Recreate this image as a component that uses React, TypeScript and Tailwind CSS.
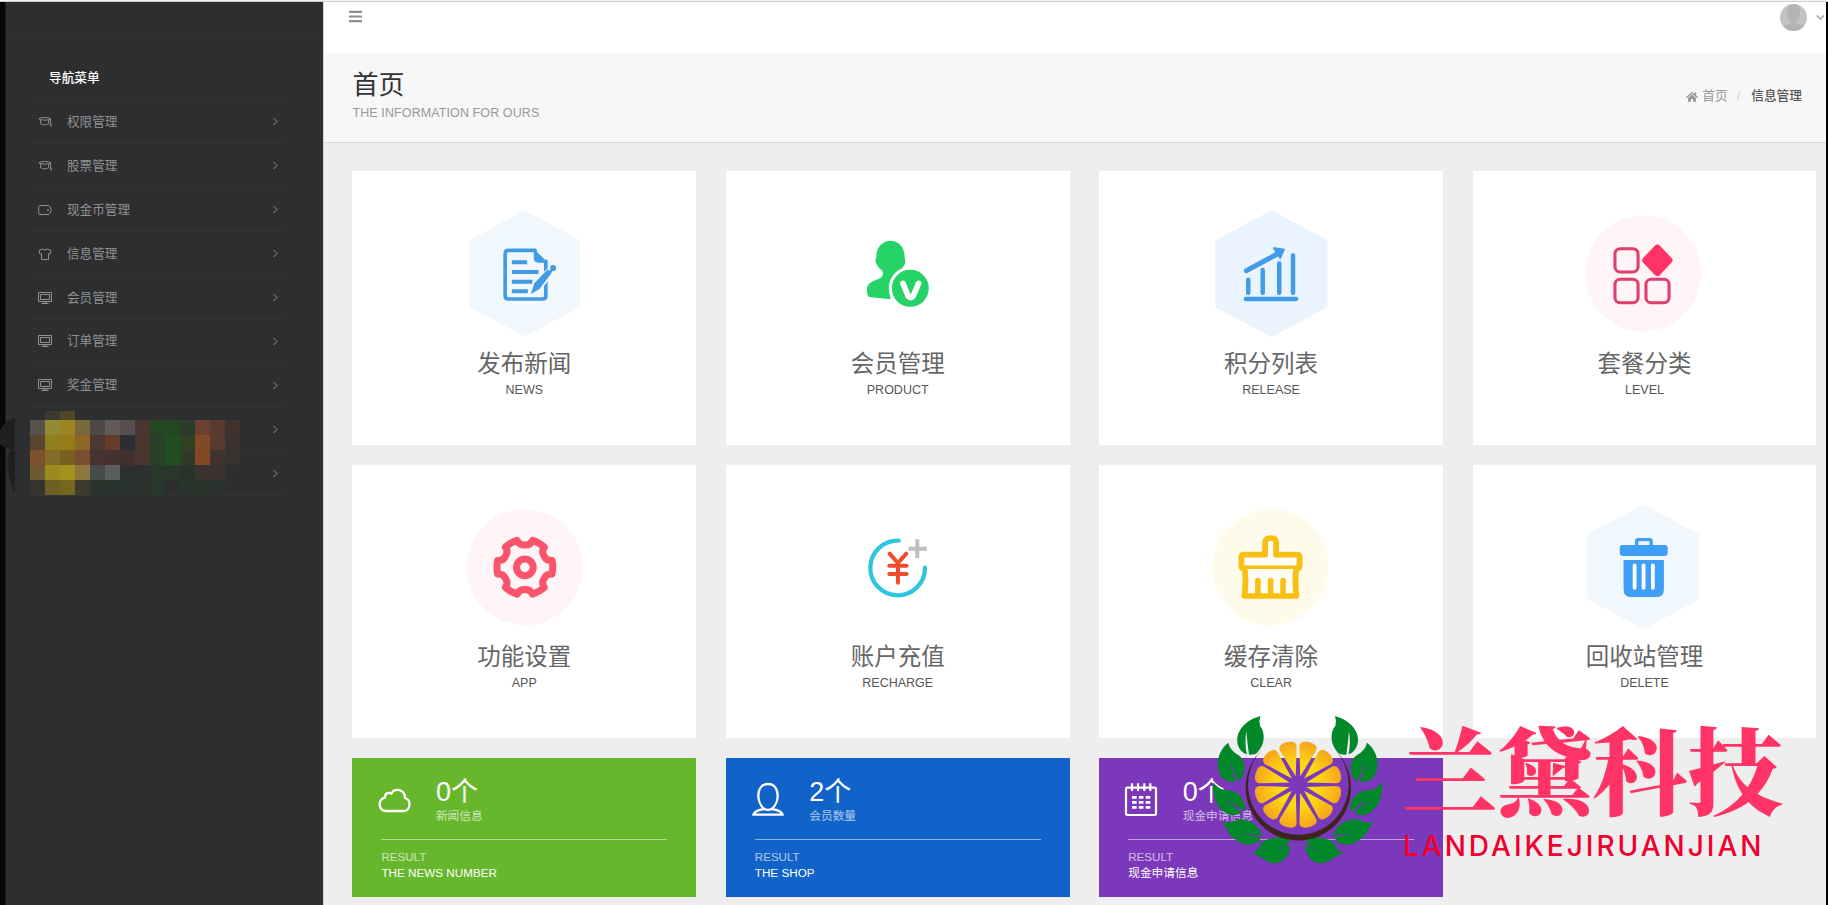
import React from "react";
import { FaBars, FaHome } from "react-icons/fa";

type IconProps = { d?: string; w?: number };

const CapIcon = () => (
  <svg viewBox="0 0 14 14" className="h-3.5 w-3.5" fill="none" stroke="currentColor" strokeWidth="1">
    <path d="M.8 3.8C3 2 10 2 13 3.8C10 5.6 4 5.6 .8 3.8ZM2.6 5v3.6c2 1.8 6 1.8 8 0V5M12.6 4v6.5M11.8 9.5h1.4v2" />
  </svg>
);
const WalletIcon = () => (
  <svg viewBox="0 0 14 14" className="h-3.5 w-3.5" fill="none" stroke="currentColor" strokeWidth="1">
    <path d="M1.5 2.5h8.7q1 0 1.6 1l1.5 3.5l-1.5 3.5q-.6 1-1.6 1H1.5q-.8 0-.8-.8V3.3q0-.8.8-.8Z" />
    <circle cx="10" cy="7" r=".7" />
  </svg>
);
const ShirtIcon = () => (
  <svg viewBox="0 0 14 14" className="h-3.5 w-3.5" fill="none" stroke="currentColor" strokeWidth="1">
    <path d="M4.6 2L1 3.5l.8 3.3h1.7v5.7h7V6.8h1.7L13 3.5L9.4 2Q7 4.2 4.6 2Z" />
  </svg>
);
const ScreenIcon = () => (
  <svg viewBox="0 0 14 14" className="h-3.5 w-3.5" fill="none" stroke="currentColor" strokeWidth="1">
    <path d="M.5 1.5h13v9H.5ZM2.5 3.5h9v5h-9ZM6 10.5v2h2v-2M3.5 12.5h7" />
  </svg>
);
const Chevron = ({ d = "M1.500 1l3.500 3.500L1.500 8", w = 1 }: IconProps) => (
  <svg viewBox="0 0 7 9" className="h-[9px] w-[7px] shrink-0" fill="none" stroke="currentColor" strokeWidth={w}>
    <path d={d} />
  </svg>
);

const menu = [
  { label: "权限管理", icon: <CapIcon /> },
  { label: "股票管理", icon: <CapIcon /> },
  { label: "现金币管理", icon: <WalletIcon /> },
  { label: "信息管理", icon: <ShirtIcon /> },
  { label: "会员管理", icon: <ScreenIcon /> },
  { label: "订单管理", icon: <ScreenIcon /> },
  { label: "奖金管理", icon: <ScreenIcon /> },
  { label: "", icon: null },
  { label: "", icon: null },
];

const mosaic: string[][] = [
  ["#54524a", "#938a32", "#9d861f", "#77693d", "#4d4748", "#635a5a", "#574e50", "#4a3530", "#23481f", "#23481f", "#2c3b2b", "#6a402f", "#593a30", "#40332f"],
  ["#5a452f", "#8f7f1d", "#957b1a", "#8c6725", "#4a3833", "#643c29", "#2b2f34", "#4a352f", "#28402a", "#1f4f20", "#304022", "#834827", "#593a2d", "#3a322f"],
  ["#7b522b", "#826c26", "#776021", "#7a4e2c", "#453330", "#45322f", "#40312f", "#4a352f", "#28402a", "#1f4f20", "#2d3b27", "#834827", "#403430", "#37322f"],
  ["#6e5a30", "#9b8a20", "#a4921e", "#8c783f", "#464b4a", "#5a5d5d", "#2c302f", "#2c302f", "#29362a", "#29362a", "#29332c", "#3c332f", "#3a322e", "#2d2e30"],
  ["#353530", "#6e6022", "#74681f", "#3d3a2b", "#28352c", "#2a332e", "#2a332e", "#2b312e", "#28372b", "#2b302e", "#29352c", "#29352c", "#2a332d", "#2d2e30"],
];

const Sidebar = () => (
  <aside className="relative flex w-[324px] shrink-0 border-r border-[#d5d6d8] bg-[#2d2e30]">
    <div className="w-[5px] shrink-0 bg-[#060709]" />
    <div className="w-px shrink-0 bg-[#17181a]" />
    <div className="min-w-0 flex-1">
      <div className="h-[35px] border-b border-[#333436]" />
      <div className="ml-[26px] w-[255px] pt-[20px]">
        <h2 className="flex h-[43.500px] items-center border-b border-[#323335] pl-[17px] text-[12.700px] font-medium text-white">
          导航菜单
        </h2>
        {menu.map((m, i) => (
          <div key={i} className="flex h-[43.900px] items-center border-b border-[#333436] pl-1.5 pr-[8px] text-[#909193]">
            <span className="w-[29px]">{m.icon}</span>
            <span className="flex-1 pt-px text-[12.600px]">{m.label}</span>
            <Chevron />
          </div>
        ))}
      </div>
    </div>
    <svg className="absolute left-0 top-[415px]" width="15" height="80" viewBox="0 0 15 80" fill="#1e2022">
      <path d="M15 1Q6 3 0 13v14q5 5 13 6v-1h2Z" />
      <path d="M12 33Q6 37 8 53q2 14 7 24V33Z" />
    </svg>
    <div className="absolute left-[30px] top-[409px]">
      <div className="ml-[15px] flex">
        <div className="h-[9px] w-[15px] bg-[#3b3a2e]" />
        <div className="h-[9px] w-[15px] bg-[#504728]" />
      </div>
      {mosaic.map((row, r) => (
        <div key={r} className="flex">
          {row.map((c, k) => (
            <div key={k} className="h-[15px] w-[15px]" style={{ backgroundColor: c }} />
          ))}
        </div>
      ))}
    </div>
  </aside>
);

const gear = (() => {
  const p = (deg: number, r: number) => {
    const t = (deg * Math.PI) / 180;
    return `${(256 + r * Math.cos(t)).toFixed(1)} ${(262 + r * Math.sin(t)).toFixed(1)}`;
  };
  let d = `M${p(-14, 84)}`;
  for (let a = 0; a < 360; a += 60) {
    d += `Q${p(a, 86)} ${p(a + 14, 84)}C${p(a + 15, 76)} ${p(a + 20, 67)} ${p(a + 30, 67)}C${p(a + 40, 67)} ${p(a + 45, 76)} ${p(a + 46, 84)}`;
  }
  return d + "Z";
})();

const Art = ({ t, children }: { t: string; children: React.ReactNode }) => (
  <svg viewBox="0 0 130 130" className="h-[130px] w-[130px]" fill="none" strokeLinecap="round" strokeLinejoin="round">
    <g transform={t}>{children}</g>
  </svg>
);

const NewsArt = () => (
  <Art t="translate(-19.500 -18) scale(.3333)">
    <path d="M257 66L417 154V348L257 434L95 348V154Z" fill="#f0f8fe" stroke="#f0f8fe" strokeWidth="10" />
    <g stroke="#429be3" strokeWidth="11">
      <path d="M319 214V317q0 10-10 10H207q-10 0-10-10V191q0-10 10-10h80" />
    </g>
    <path d="M283 176l42 42h-28q-14 0-14-14Z" fill="#429be3" />
    <path d="M217 217h46M217 246h80M217 275h62M217 304h48" stroke="#429be3" strokeWidth="12" strokeLinecap="butt" />
    <path d="M274 312L285 279L337 229q8-6 12 1q4 6-3 12L300 297Z" fill="#429be3" stroke="#f0f8fe" strokeWidth="9" />
    <path d="M274 312L285 279L325 238L336 249L300 297Z" fill="#429be3" />
    <circle cx="341" cy="234" r="9" fill="#429be3" />
  </Art>
);
const MemberArt = () => (
  <Art t="translate(-393 -18) scale(.3333)">
    <path
      d="M1309 204C1307 135 1397 135 1394 204Q1400 217 1391 228Q1385 242 1377 250Q1345 264 1352 328L1287 321Q1281 316 1281 300C1281 272 1310 274 1325 261Q1332 252 1326 241Q1316 236 1312 226Q1303 214 1309 204Z"
      fill="#25d366"
    />
    <circle cx="1411" cy="295" r="60" fill="#25d366" stroke="#fff" strokeWidth="9" />
    <path d="M1389 280l16 39q7 7 14 0l17-39" stroke="#fff" strokeWidth="17" />
  </Art>
);
const ChartArt = () => (
  <Art t="translate(-16.300 -18) scale(.3444 .3333)">
    <path d="M238 66L395 154V348L238 436L79 348V154Z" fill="#eaf4fe" stroke="#eaf4fe" strokeWidth="10" />
    <g stroke="#419be9" strokeWidth="13">
      <path d="M163 327h146M170 269v40M212 240v69M260 220v89M300 196v113" />
      <path d="M165 242L258 190" strokeWidth="15" />
    </g>
    <path d="M246 173l29 5l-12 28l-20-32Z" fill="#419be9" stroke="#419be9" strokeWidth="3" />
  </Art>
);
const LevelArt = () => (
  <Art t="translate(-389.700 -18) scale(.3444 .3333)">
    <ellipse cx="1318" cy="250" rx="168" ry="174" fill="#fff4f6" />
    <g stroke="#e03d70" strokeWidth="9">
      <rect x="1236" y="176" width="67" height="70" rx="15" />
      <rect x="1236" y="268" width="67" height="70" rx="15" />
      <rect x="1326" y="268" width="67" height="70" rx="15" />
    </g>
    <path d="M1359 174L1393 211L1359 248L1325 211Z" fill="#ff3366" stroke="#ff3366" strokeWidth="20" />
  </Art>
);
const GearArt = () => (
  <Art t="translate(-19.500 -21) scale(.3333)">
    <circle cx="256" cy="262" r="174" fill="#fff4f6" />
    <path d={gear} stroke="#f9546b" strokeWidth="21" />
    <circle cx="256" cy="262" r="25" stroke="#f9546b" strokeWidth="21" />
  </Art>
);
const YenArt = () => (
  <Art t="translate(-393 -21) scale(.3333)">
    <path d="M1376 182A82 82 0 1 0 1455 263" stroke="#2cc6e2" strokeWidth="13" />
    <path d="M1349 221l25 28l25-28M1374 249v59M1348 257h52M1348 282h52" stroke="#f04b2b" strokeWidth="12" />
    <path d="M1432 178v56M1405 206h56" stroke="#bfbfc1" strokeWidth="12" strokeLinecap="butt" />
  </Art>
);
const BrushArt = () => (
  <Art t="translate(-16.300 -21) scale(.3444 .3333)">
    <ellipse cx="235" cy="262" rx="168" ry="174" fill="#fffbea" />
    <path
      d="M219 224V188q0-14 16-14t16 14v36h60q8 0 8 8v25q0 8-8 8H158q-8 0-8-8v-25q0-8 8-8Z"
      fill="#fffdf4"
      stroke="#f8bf14"
      strokeWidth="17"
    />
    <path d="M160 267q4 45-1 81h151q-5-38-1-81" fill="#fffdf4" stroke="#f8bf14" strokeWidth="17" />
    <path d="M198 301v44M235 301v44M271 301v44" stroke="#f8bf14" strokeWidth="16" />
  </Art>
);
const TrashArt = () => (
  <Art t="translate(-389.700 -21) scale(.3444 .3333)">
    <path d="M1320 80L1476 164V355L1320 441L1161 355V164Z" fill="#f0f8fe" stroke="#f0f8fe" strokeWidth="10" />
    <rect x="1250" y="195" width="139" height="33" rx="9" fill="#3f9ef5" />
    <path d="M1299 196v-12q0-5 5-5h32q5 0 5 5v12" stroke="#3f9ef5" strokeWidth="10" />
    <path d="M1261 240h117v88q0 23-20 23h-77q-20 0-20-23Z" fill="#3f9ef5" />
    <path d="M1293 256v68M1319 256v68M1346 256v68" stroke="#fff" strokeWidth="11" />
  </Art>
);

const tiles = [
  { title: "发布新闻", sub: "NEWS", art: <NewsArt /> },
  { title: "会员管理", sub: "PRODUCT", art: <MemberArt /> },
  { title: "积分列表", sub: "RELEASE", art: <ChartArt /> },
  { title: "套餐分类", sub: "LEVEL", art: <LevelArt /> },
  { title: "功能设置", sub: "APP", art: <GearArt /> },
  { title: "账户充值", sub: "RECHARGE", art: <YenArt /> },
  { title: "缓存清除", sub: "CLEAR", art: <BrushArt /> },
  { title: "回收站管理", sub: "DELETE", art: <TrashArt /> },
];

const stats = [
  {
    n: "0个",
    label: "新闻信息",
    foot: "THE NEWS NUMBER",
    color: "bg-[#66b72b]",
    icon: (
      <svg viewBox="111 120 108 120" className="h-10 w-9" fill="none" stroke="#fff" strokeWidth="7" strokeLinejoin="round">
        <path d="M139 213C114 213 112 177 135 173C134 157 149 157 154 161C163 143 195 147 195 174C215 180 212 213 191 213Z" />
      </svg>
    ),
  },
  {
    n: "2个",
    label: "会员数量",
    foot: "THE SHOP",
    color: "bg-[#1163c9]",
    icon: (
      <svg viewBox="121 120 108 120" className="h-10 w-9" fill="none" stroke="#fff" strokeWidth="7" strokeLinejoin="round">
        <path d="M175 132C138 132 139 188 164 207Q136 211 131 224H219Q214 211 186 207C211 188 212 132 175 132ZM164 207Q175 212 186 207" />
      </svg>
    ),
  },
  {
    n: "0个",
    label: "现金申请信息",
    foot: "现金申请信息",
    color: "bg-[#7c38ba]",
    icon: (
      <svg viewBox="102 240 108 120" className="h-10 w-9" fill="none" stroke="#fff" strokeWidth="6.500">
        <rect x="108" y="263" width="90" height="82" rx="4" />
        <path d="M126 250v23M144 250v23M163 250v23M181 250v23" />
        <path d="M126 292h55M126 307h55M126 322h55" strokeWidth="8" strokeDasharray="14 6.500" />
      </svg>
    ),
  },
];

const leaves = [
  {
    d: "M511 48C440 68 424 130 461 159Q474 167 497 162C530 134 524 92 510 78Q506 62 511 48Z",
    v: "M469 93Q463 130 471 166L477 165Q472 130 469 93Z",
    c: "#f1f1f1",
  },
  {
    d: "M415 128C375 158 376 215 401 237Q415 248 440 246C468 235 472 185 448 167Q420 152 415 128Z",
    v: "M420 183Q424 217 438 248L444 244Q428 214 420 183Z",
    c: "#7c38ba",
  },
  {
    d: "M370 247C364 300 393 344 430 346Q449 345 465 331C468 297 441 270 410 271Q384 268 370 247Z",
    v: "M400 296Q429 311 455 340L461 334Q434 309 400 296Z",
    c: "#7c38ba",
  },
  {
    d: "M399 365C417 414 455 439 487 433Q507 427 517 407C504 369 470 352 440 359Q420 371 399 365Z",
    v: "M445 400Q480 401 511 414L515 407Q480 400 445 400Z",
    c: "#7c38ba",
  },
  {
    d: "M483 460C520 466 528 497 566 488Q595 476 600 444L595 413C567 411 530 412 512 431Q507 455 483 460Z",
    v: "M540 460Q575 447 602 431L600 425Q575 447 540 460Z",
    c: "#7c38ba",
  },
];

const Wreath = () => (
  <g>
    {leaves.map((l, i) => (
      <g key={i}>
        <path d={l.d} fill="#00882b" />
        <path d={l.v} fill={l.c} />
      </g>
    ))}
  </g>
);

const Brand = () => (
  <div className="absolute left-[1210px] top-[712px] flex w-[600px]">
    <svg viewBox="360 36 528 468" className="h-[156px] w-[176px] shrink-0">
      <defs>
        <radialGradient id="citrus" gradientUnits="userSpaceOnUse" cx="0" cy="0" r="134">
          <stop offset="0" stopColor="#ffe600" />
          <stop offset=".5" stopColor="#fdd612" />
          <stop offset="1" stopColor="#f5a11f" />
        </radialGradient>
      </defs>
      <Wreath />
      <g transform="translate(1246 0) scale(-1 1)">
        <Wreath />
      </g>
      <path d="M515 150A158 158 0 1 0 735 150A151 151 0 1 1 515 150Z" fill="#3e241c" />
      <g transform="translate(624 254)">
        {[15, 45, 75, 105, 135, 165, 195, 225, 255, 285, 315, 345].map((a) => (
          <path
            key={a}
            transform={`rotate(${a})`}
            d="M0-26L-26-113Q-28-124-17-129Q0-135 17-129Q28-124 26-113Z"
            fill="url(#citrus)"
          />
        ))}
      </g>
    </svg>
    <div className="ml-[16px] flex flex-col whitespace-nowrap">
      <span className="mt-[7px] font-['Noto_Serif_CJK_SC','Noto_Sans_CJK_SC',serif] text-[95.200px] font-black leading-[96px] text-[#ff3366]">
        兰黛科技
      </span>
      <span className="ml-px mt-[13px] font-['Inter',sans-serif] text-[28px] font-medium leading-[36px] tracking-[3px] text-[#f0002f]">
        LANDAIKEJIRUANJIAN
      </span>
    </div>
  </div>
);

export default function App() {
  return (
    <div className="relative flex h-[905px] w-[1828px] flex-col overflow-hidden bg-[#eee] font-['Liberation_Sans','Noto_Sans_CJK_SC',sans-serif]">
      <div className="h-[2px] shrink-0 border-b border-[#cfcfcf] bg-[#f4f4f4]" />
      <div className="flex min-h-0 flex-1">
        <Sidebar />
        <main className="flex min-w-0 flex-1 flex-col">
          <header className="flex h-[51px] shrink-0 items-start justify-between bg-white pl-[24.500px] pr-[1px]">
            <FaBars className="mt-[6.500px] h-[15px] w-[13px] text-[#8c8c8c]" />
            <div className="flex items-center gap-[9px] pt-[2px] text-[#999]">
              <svg viewBox="0 0 27 27" className="h-[27px] w-[27px]">
                <clipPath id="face">
                  <circle cx="13.500" cy="13.500" r="13.500" />
                </clipPath>
                <g clipPath="url(#face)">
                  <rect width="27" height="27" fill="#c4c2c3" />
                  <path d="M7 7Q7 0 13.500 0T20 7Q20 15 16 18q0 2 10 4v5H1v-5q10-2 10-4Q7 15 7 7Z" fill="#b5b3b4" />
                </g>
              </svg>
              <svg viewBox="0 0 9 9" className="h-[9px] w-[9px]" fill="none" stroke="currentColor" strokeWidth="1.300">
                <path d="M.8 2.500l3.600 3.600L8 2.500" />
              </svg>
            </div>
          </header>
          <section className="flex h-[90px] shrink-0 items-center justify-between border-b border-[#dcdcdc] bg-[#f7f7f7] pl-[28.500px] pr-[24px]">
            <div className="-mt-[3px]">
              <h1 className="text-[26px] leading-[30px] text-[#333]">首页</h1>
              <p className="mt-[4px] text-[12.500px] leading-[18px] tracking-[0.100px] text-[#999]">THE INFORMATION FOR OURS</p>
            </div>
            <nav className="-mt-px flex items-center text-[12.700px] text-[#999]">
              <FaHome className="mr-[4px] h-[12px] w-[12px]" />
              <span>首页</span>
              <span className="mx-[9px] text-[#ccc]">/</span>
              <span className="ml-[2px] font-medium text-[#555]">信息管理</span>
            </nav>
          </section>
          <div className="ml-[28.400px] mt-[28px] grid w-[1464px] grid-cols-4 gap-x-[29.600px] gap-y-[20.100px]">
            {tiles.map((t) => (
              <div key={t.sub} className="flex h-[273.500px] flex-col items-center bg-white pt-[36.800px]">
                {t.art}
                <h3 className="mt-[9px] text-[23.500px] leading-[34px] text-[#666]">{t.title}</h3>
                <p className="text-[12.500px] leading-[18px] text-[#555]">{t.sub}</p>
              </div>
            ))}
            {stats.map((s) => (
              <div key={s.color} className={"h-[139px] px-[29px] pt-[18px] text-white " + s.color}>
                <div className="flex h-[64px] border-b border-white/50">
                  <div className="-ml-[4.500px] w-[59px] pt-[4px]">{s.icon}</div>
                  <div>
                    <div className="text-[27px] leading-[32px]">{s.n}</div>
                    <div className="text-[11.700px] leading-[16px] text-white/65">{s.label}</div>
                  </div>
                </div>
                <div className="mt-[8px] text-[11.600px] leading-[17px] text-white/65">RESULT</div>
                <div className="text-[11.700px] leading-[16px]">{s.foot}</div>
              </div>
            ))}
          </div>
        </main>
        <div className="w-[2px] shrink-0 bg-black" />
      </div>
      <Brand />
    </div>
  );
}
